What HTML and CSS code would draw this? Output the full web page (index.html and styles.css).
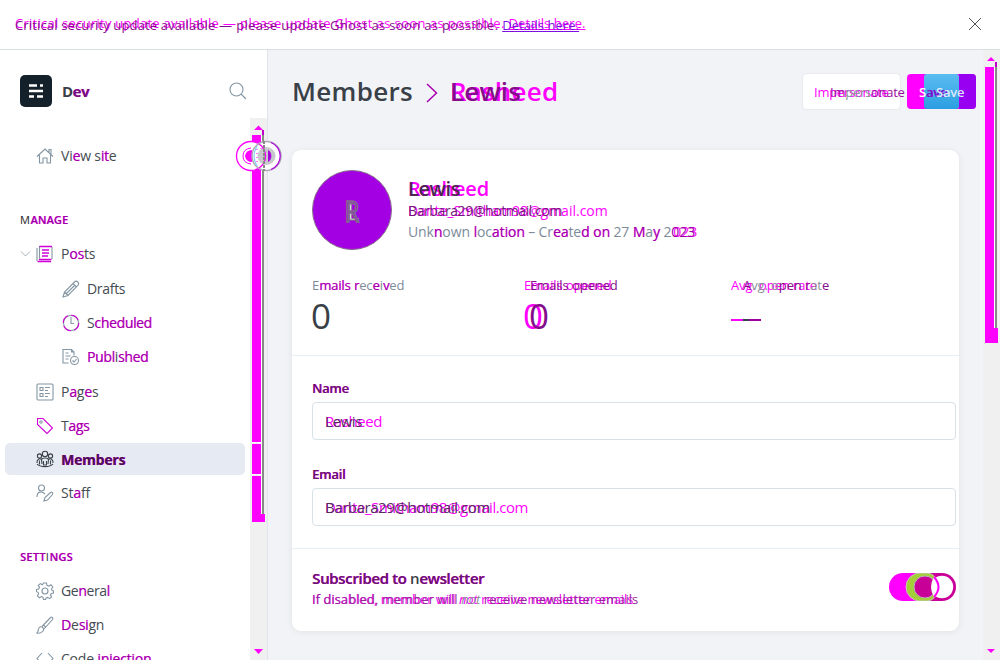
FILE: index.html
```html
<!DOCTYPE html>
<html lang="en">
<head>
<meta charset="utf-8">
<title>Members</title>
<link rel="stylesheet" href="styles.css">
</head>
<body>
<div class="app">
  <header class="banner">
    <div class="ghost">
      <span class="under banner-a"><b>Critical security update available</b> — please update Ghost as soon as possible. <u>Details here.</u></span>
      <span class="over banner-b"><b>Critical security update available</b> — please update Ghost as soon as possible. <u>Details here.</u></span>
    </div>
    <svg class="close" width="14" height="14" viewBox="0 0 14 14"><path d="M1 1l12 12M13 1L1 13"/></svg>
  </header>
  <div class="body">
    <aside class="side">
      <div class="brand">
        <svg width="32" height="32" viewBox="0 0 32 32"><rect width="32" height="32" rx="5" fill="#15212a"/><path d="M9 10.500h8M20 10.500h3M9 16h14M9 21.500h5M17 21.500h6" stroke="#fff" stroke-width="2.600"/></svg>
        <span class="brand-name">D<i>ev</i></span>
        <svg class="ico search" width="18" height="18" viewBox="0 0 18 18"><circle cx="7.500" cy="7.500" r="6.500"/><path d="M12 12l5 5"/></svg>
      </div>
      <div class="side-scroll">
        <nav class="nav">
          <a class="item"><svg class="ico" width="18" height="18" viewBox="0 0 18 18"><path d="M1 9.500L9 2l8 7.500M3.500 8v8h3.500v-5h4v5h3.500V8M13 5V2.500h2V7"/></svg><span>Vi<i>e</i>w s<i>it</i>e</span></a>
          <h4>M<i>ANAGE</i></h4>
          <a class="item has-caret"><svg class="caret" width="10" height="6" viewBox="0 0 10 6"><path d="M.500.500L5 5 9.500.500"/></svg><svg class="ico" width="18" height="18" viewBox="0 0 18 18"><path d="M3.500 1v12.500M1 3v13M16 2v12"/><path class="hot" d="M3.500 1.500H16M3 14.500h12.500M1.500 16.500H15" stroke-width="1.600"/><path class="hot" d="M6 5h7M6 8h7M6 11h6" stroke-width="1.500"/></svg><span>P<i>os</i>ts</span></a>
          <a class="item sub"><svg class="ico" width="18" height="18" viewBox="0 0 18 18"><path d="M1 17l1.500-5L12.500 2a2.300 2.300 0 013.300 3.300L6 15.500 1 17zM11 3.500l3.500 3.500M2.500 12L6 15.500M4.500 13.500l8-8"/></svg><span class="t-drafts">Drafts</span></a>
          <a class="item sub"><svg class="ico" width="18" height="18" viewBox="0 0 18 18"><circle cx="9" cy="9" r="7.500"/><circle class="hot" cx="9" cy="9" r="7.800" stroke-dasharray="9 3.200" /><path d="M9 3v6.500h3"/></svg><span class="t-sch">S<i>cheduled</i></span></a>
          <a class="item sub"><svg class="ico" width="18" height="18" viewBox="0 0 18 18"><path d="M6.500 15H1V1.500h8.500L12 4v3.500M9.500 1.500V4H12M3.500 5h3M3.500 8h5M3.500 11h3"/><circle cx="12.500" cy="12.500" r="4"/><path d="M10.500 12.500l1.500 1.500 2.500-3"/></svg><span class="t-sch"><i>Publ</i>i<i>shed</i></span></a>
          <a class="item"><svg class="ico" width="18" height="18" viewBox="0 0 18 18"><rect x="1" y="1" width="16" height="16" rx="1"/><path d="M4 4.500h3v3H4zM4 10.500h3v3H4zM9 4.500h5M9 7.500h3M9 10.500h5M9 13.500h3"/></svg><span>P<i>a</i>g<i>e</i>s</span></a>
          <a class="item"><svg class="ico" width="18" height="18" viewBox="0 0 18 18"><path class="hot" d="M1.500 1.500H7L16.500 11 11 16.500 1.500 7.500z"/><circle cx="5" cy="5" r="1.200"/></svg><span class="t-tags">T<i>ags</i></span></a>
          <a class="item active"><svg class="ico" width="18" height="18" viewBox="0 0 18 18"><circle cx="9" cy="4" r="2.700"/><circle cx="3.500" cy="6" r="2.100"/><circle cx="14.500" cy="6" r="2.100"/><path d="M6 14l-.500-4.500C6 7.500 12 7.500 12.500 9.500L12 14M7.500 11v4h3v-4M1 13c-.500-4 3-5 4.500-3.500M17 13c.500-4-3-5-4.500-3.500M1 14c3 3.500 13 3.500 16 0M3.500 10.500v4M14.500 10.500v4"/></svg><span><i>Members</i></span></a>
          <a class="item"><svg class="ico" width="18" height="18" viewBox="0 0 18 18"><circle cx="5.500" cy="4" r="3"/><path d="M1 13c0-6 5-6 8-3M8 17l1-3.500 5.500-5c1.500-1 3 .500 2 2L11.500 16z"/></svg><span>St<i>a</i>ff</span></a>
          <h4 class="settings"><i>SETT</i>I<i>NGS</i></h4>
          <a class="item"><svg class="ico" width="18" height="18" viewBox="0 0 18 18"><circle cx="9" cy="9" r="3"/><path d="M7.500 1h3l.5 2.300 1.800.8 2-1.300 2 2.200-1.300 2 .7 1.600L17.500 9v2l-2.300.4-.8 1.500 1.200 2-2 1.700-2-1.200-1.500.5L9.500 17.500h-2L7 15.300l-1.600-.7-2 1.200-2-2 1.200-2-.6-1.500L.5 9.700V7.500l2.200-.4.8-1.700-1.200-2 2-1.800 2 1.200z"/></svg><span class="t-tags">Ge<i>n</i>era<i>l</i></span></a>
          <a class="item"><svg class="ico" width="18" height="18" viewBox="0 0 18 18"><path d="M1 17c2-1.500.500-5 3-6s4.500 2 3 4-4 2.500-6 2zM6 10.500l8.500-9c1.500-1 3 .500 2 2L8 13M7.500 9l2.500 2.500"/></svg><span><i>D</i>e<i>si</i>gn</span></a>
          <a class="item"><svg class="ico" width="18" height="18" viewBox="0 0 18 18"><path d="M6 3L1 8.500 6 14M12 3l5 5.500-5 5.500"/></svg><span>Code <i>injection</i></span></a>
        </nav>
        <div class="track side-track">
          <svg width="18" height="542" viewBox="0 0 18 542"><path fill="#f0f" d="M4 12h9L8.500 7.500zM2 17h9v307H2zM2 326h9v30H2zM2 358h9v38h4v8H2zM4 531h9l-4.500 5z"/><path fill="#fff" d="M11 17h1v379h-1z"/><path fill="#c000c8" d="M12 12h2v5h-2z"/><path fill="#888" d="M12 17h2v379h-2z"/><path stroke="#fff" d="M2 324.500h10M2 356.500h10"/></svg>
        </div>
        <svg class="handle" width="48" height="32" viewBox="0 0 48 32"><circle cx="16" cy="16" r="14.500" fill="#fff"/><circle cx="31.500" cy="16" r="14.500" fill="#fff"/><path d="M22 9v15M26 8v16" stroke="#f0f" stroke-width="1" stroke-dasharray="1 3"/><circle cx="31.500" cy="16" r="9" fill="#c8c8cc"/><path d="M33 10a7 7 0 010 12z" fill="#a800e0"/><path d="M17 10q-6 0-7 6 1 6 7 6z" fill="#f0f"/><path d="M16 8q-8 1-8 8t8 8" fill="none" stroke="#f0f"/><circle cx="16" cy="16" r="14.500" fill="none" stroke="#f0f" stroke-width="1.300"/><circle cx="31.500" cy="16" r="14.500" fill="none" stroke="#b0a8b8" stroke-width="1.500"/><path d="M22 6q-6 10 0 20" fill="none" stroke="#8bd0f0" stroke-width="1.300"/><path d="M36 2.500a14.500 14.500 0 010 27" fill="none" stroke="#b000e0" stroke-width="1.200"/><path d="M29 1v30" stroke="#888" stroke-width="2" stroke-dasharray="3 1"/></svg>
      </div>
    </aside>
    <main class="main">
      <div class="content">
        <div class="top">
          <h1><span class="crumb">Members</span><svg width="12" height="20" viewBox="0 0 12 20"><path d="M1 1l9.500 9L1 19" fill="none" stroke="#a800b0" stroke-width="1.500"/></svg><span class="ghost"><span class="under">Rasheed</span><span class="over">Lewis</span></span></h1>
          <div class="btn imp"><div class="ghost"><span class="under">Impersonate</span><span class="over">Im<em>pers</em>onate</span></div></div>
          <div class="btn save"><span class="s1"></span><span class="s2"></span><span class="s3"></span><div class="save-text ghost"><span class="w1">S<i>ave</i></span><span class="w2">Save</span></div></div>
        </div>
        <section class="card">
          <div class="profile">
            <div class="avatar"><div class="ghost"><span class="r1">R</span><span class="r2">L</span></div></div>
            <div class="who">
              <h2 class="ghost"><span class="under">Rasheed</span><span class="over">Lewis</span></h2>
              <p class="mail ghost"><span class="under">Dante_Smitham98@gmail.com</span><span class="over">Barbara29@hotmail.com</span></p>
              <p class="loc">Unk<i>n</i>own <i>l</i>oc<i>ation</i> – Cr<i>ea</i>te<i>d</i> <i>on</i> 27 <i>M</i>a<i>y</i> 2<i class="year">023</i></p>
            </div>
          </div>
          <div class="stats">
            <div><label>E<i>mails</i> <i>r</i>ec<i>e</i>i<i>v</i>ed</label><strong>0</strong></div>
            <div><label class="ghost shift-s"><span class="under">Emails opened</span><span class="over">Emails opened</span></label><strong class="ghost shift-s"><span class="under">0</span><span class="over">0</span></strong></div>
            <div><label class="ghost shift-l"><span class="under">Avg. open rate</span><span class="over">A<em>vg.</em> <em>o</em>pen r<em>at</em>e</span></label><div class="dash"></div></div>
          </div>
          <div class="form">
            <label class="fl"><i>Name</i></label>
            <div class="input ghost"><span class="under">Rasheed</span><span class="over n">Lewis</span></div>
            <label class="fl second"><i>Email</i></label>
            <div class="input ghost"><span class="under">Dante_Smitham98@gmail.com</span><span class="over">Barbara29@hotmail.com</span></div>
          </div>
          <div class="news">
            <div>
              <h3><i>Subscribed</i> <i>to</i> n<i>ewsletter</i></h3>
              <p class="ghost"><span class="under">If disabled, member will <em>not</em> receive newsletter emails</span><span class="over">If disabled, member will <em>not</em> receive newsletter emails</span></p>
            </div>
            <svg class="toggle" width="68" height="28" viewBox="0 0 68 28"><rect width="52" height="28" rx="14" fill="#f0f"/><rect x="18" width="49" height="28" rx="14" fill="#c90098"/><path d="M31 0a14 14 0 000 28h7q5 0 9-5V5q-4-5-9-5z" fill="#a3cf38" stroke="#c6c8b8"/><circle cx="53" cy="14" r="11.200" fill="#fff"/><circle cx="36" cy="14" r="11" fill="#c90098" stroke="#bcb0c0"/><path d="M45 4q-6 10 0 20 5-2 5-10T45 4z" fill="#fff"/><path d="M45 4q9 10 0 20" fill="none" stroke="#f0f" stroke-width="2"/></svg>
          </div>
        </section>
      </div>
      <div class="track main-track">
        <svg width="17" height="610" viewBox="0 0 17 610"><path fill="#f0f" d="M4 11h8L8 7zM2 17h9v261h4v15H2zM4 599h8l-4 4z"/><path fill="#fff" d="M11 17h1v261h-1z"/><path fill="#c000c8" d="M12 12h2v5h-2z"/><path fill="#888" d="M12 17h2v261h-2z"/></svg>
      </div>
    </main>
  </div>
</div>
</body>
</html>
```
FILE: styles.css
```css
*{box-sizing:border-box}
body{margin:0;font-family:"Open Sans","Noto Sans",sans-serif;font-size:14px;color:#394047;background:#fff}
h1,h2,h3,h4,p{margin:0}
i{font-style:normal;color:#a000a4;text-shadow:.5px 0 0 rgba(255,0,255,.7)}
.app{width:1000px;height:660px;overflow:hidden;display:flex;flex-direction:column}
.ghost{display:grid;justify-items:start;white-space:nowrap}
.ghost>*{grid-area:1/1}
.under{color:#f0f}
.over{color:#850c8a}
.over em{color:#8a9098;font-style:normal}

.banner{height:50px;flex:none;border-bottom:1px solid #dadfe2;display:flex;align-items:center;justify-content:space-between;padding:0 18px 0 15px;font-size:13px;line-height:20px}
.banner-a{letter-spacing:.4px;margin-top:-1px}
.banner-a b{font-weight:500;letter-spacing:.26px}
.banner-a u{letter-spacing:.07px}
.banner-b{letter-spacing:.34px;margin-top:1px}
.banner-b b{font-weight:500;letter-spacing:.15px}
.banner-b u{letter-spacing:.07px;color:#7c10e0}
.close{stroke:#555;fill:none;margin-bottom:2px}

.body{flex:1;min-height:0;display:flex}
.side{width:268px;flex:none;border-right:1px solid #dfe4ea;display:flex;flex-direction:column}
.brand{height:68px;padding:14px 20px 0;display:flex;align-items:center;flex:none}
.brand-name{font-size:15px;font-weight:700;letter-spacing:-.5px;margin-left:10px;padding-bottom:1px}
.brand-name i{color:#74107a}
.search{margin-left:auto}
.ico{fill:none;stroke:#8496a3;stroke-width:1.100;flex:none}
.hot{stroke:#d000d8}
.side-scroll{position:relative;flex:1;min-height:0;display:flex;overflow:visible}
.nav{width:250px;padding:21px 5px 0;height:542px;overflow:hidden}
.item{display:flex;align-items:center;height:34px;padding-left:31px;gap:6px;border-radius:5px;letter-spacing:-.2px;color:#444b52}
.item>span{padding-bottom:2px}
.item .ico{margin-right:1px}
.nav h4{font-size:11px;font-weight:400;line-height:20px;margin:37px 0 7px 15px;letter-spacing:.5px;color:#222}
.nav h4 i{font-weight:600;letter-spacing:.1px}
.nav .settings i{letter-spacing:.3px}
.has-caret{padding-left:15px;gap:6px;margin-bottom:1px}
.caret{width:11px;fill:none;stroke:#a5b0b8;margin-right:-1px}
.sub{padding-left:57px;gap:6px}
.t-drafts{letter-spacing:-.3px}
.t-sch{letter-spacing:-.35px}
.t-tags{letter-spacing:-.4px}
.sub+.item:not(.sub){margin-top:1px}
.active{height:32px;background:#e6eaf2;font-weight:700;margin-bottom:1px}
.active>span{padding-bottom:0}
.active .ico{stroke:#394047}
.active i{color:#4a1450;text-shadow:.5px -.5px 0 #f0f}
.track{background:#f0f0f0;flex:none;overflow:hidden}
.track svg{display:block}
.side-track{width:17px}
.handle{position:absolute;left:235px;top:22px}

.main{flex:1;min-width:0;display:flex;background:#f2f3f7}
.content{flex:1;min-width:0;padding:24px 7px 0 24px}
.main-track{width:17px}
.top{display:flex;height:35px;align-items:center}
h1{font-size:26px;font-weight:600;line-height:35px;display:flex;align-items:center;letter-spacing:.2px}
.crumb{letter-spacing:.3px}
h1 svg{margin:2px 12px 0 13px}
.btn{height:35px;border-radius:4px;font-size:13px;line-height:35px}
.imp{width:97px;background:#fff;box-shadow:0 0 2px rgba(0,0,0,.12);margin:0 7px 0 auto;padding:1px 0 0 11px;letter-spacing:-.25px}
.imp .over{margin-left:16px;color:#96109c}
.save{position:relative;display:flex;width:69px;overflow:hidden;background:#f0f;font-weight:600}
.s1{width:17px}
.s2{width:35px;background:linear-gradient(#5bbcf1,#2b9ee1);border-radius:3px}
.s3{width:17px;background:#9800f2}
.save-text{position:absolute;left:12px;top:1px;letter-spacing:-.2px}
.w1{color:#fff}
.w1 i{color:#7412c8}
.w2{margin-left:17px;color:#dceafa}

.content{display:flex;flex-direction:column}
.card{width:667px;height:481px;margin-top:41px;background:#fff;border-radius:9px;box-shadow:0 1px 7px rgba(0,0,0,.07)}
.profile{display:flex;padding:20px 20px 0;gap:16px;height:126px}
.avatar{width:80px;height:80px;border-radius:50%;background:#a400e4;border:1px solid #88708c;display:flex;align-items:center;justify-content:center;font-size:24px;line-height:30px}
.avatar .ghost{margin-top:1px}
.r1{color:#a400e4;-webkit-text-stroke:1.300px #80708a;transform:scaleY(1.2)}
.r2{color:#fff;font-size:22px;margin-left:3px;-webkit-text-stroke:.8px #80708a}
.who{padding-top:5px}
h2{font-size:20px;line-height:27px;font-weight:600;letter-spacing:-.2px}
h2 .over{color:#4d2452;letter-spacing:-.4px}
.mail{font-size:14px;line-height:20px;margin-top:-1px}
.mail .over{letter-spacing:-.4px;color:#741b7a}
.loc{line-height:22px;letter-spacing:-.1px;color:#7c8b9a}
.year{text-shadow:2px 0 0 #f0f}
.stats{display:grid;grid-template-columns:212px 207px 1fr;padding:0 20px;height:80px;border-bottom:1px solid #e6edf4}
.stats label{display:block;font-size:13px;line-height:18px;color:#7c8b9a;letter-spacing:-.1px}
.stats label.ghost,.stats strong.ghost{display:grid}
.stats strong{display:block;font-weight:400;font-size:35px;line-height:44px;margin-left:-1px}
.shift-s .over{margin-left:6px}
.shift-l .over{margin-left:12px}
.dash{width:30px;height:2px;margin-top:25px;background:linear-gradient(90deg,#f0f 0 12px,#394047 12px 18px,#9c009f 18px)}
.form{height:193px;border-bottom:1px solid #e6edf4;padding:22px 3px 0 20px}
.fl{display:block;font-size:13px;font-weight:600;line-height:20px;letter-spacing:-.2px;margin-bottom:4px}
.fl i,.news h3 i{color:#641a68;text-shadow:.5px -.3px 0 #f0f}
.second{margin-top:24px}
.input{height:38px;border:1px solid #d7e1e8;border-radius:4px;padding:0 12px;font-size:15px;line-height:36px;letter-spacing:-.44px;width:644px}
.input .over{color:#553060}
.input .n{letter-spacing:-.36px}
.news{display:flex;justify-content:space-between;padding:17px 2px 0 20px}
.news h3{font-size:15px;font-weight:600;line-height:24px;letter-spacing:-.34px}
.news p{font-size:13px;line-height:18px}
.news p .under{letter-spacing:-.04px}
.news p .over{color:#96289c;letter-spacing:.05px}
.news em{font-style:italic}
.toggle{margin-top:7px}
```
